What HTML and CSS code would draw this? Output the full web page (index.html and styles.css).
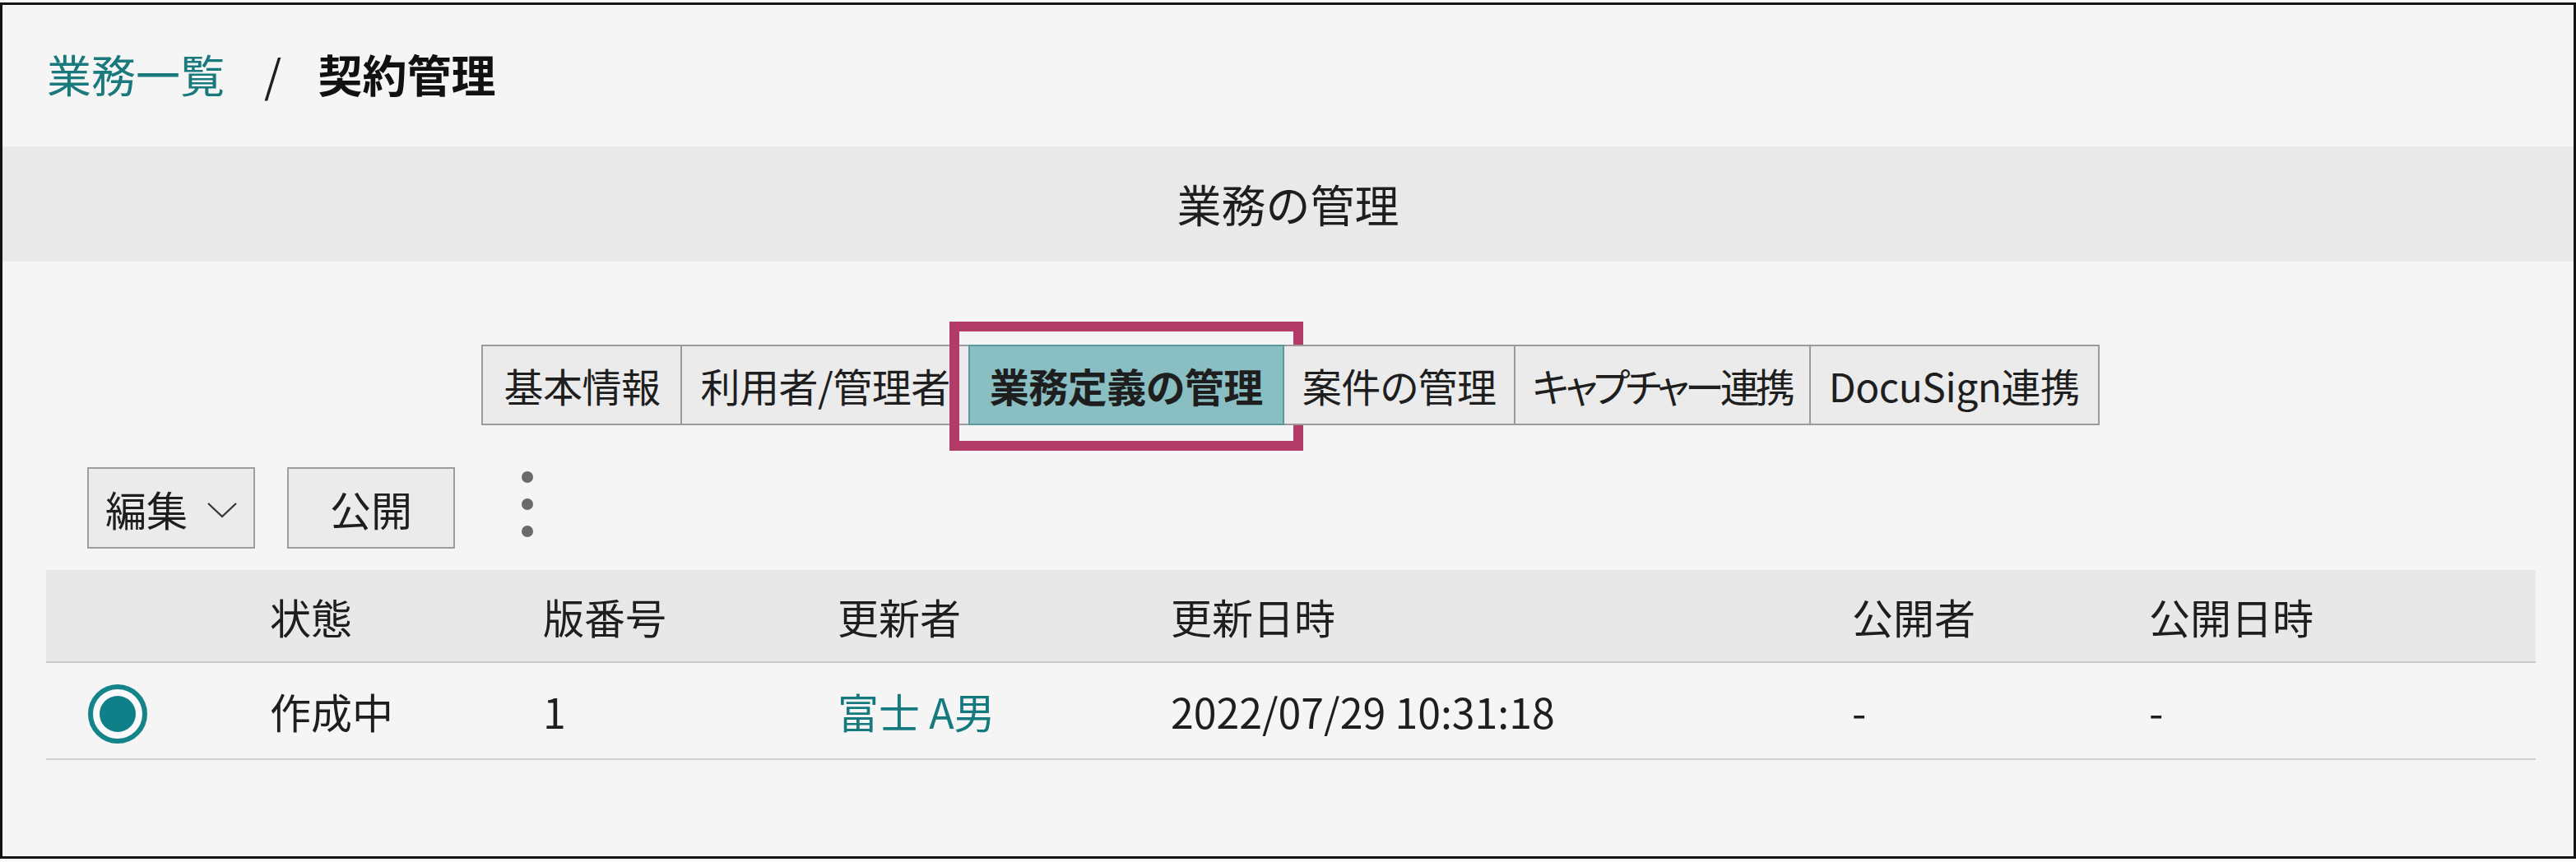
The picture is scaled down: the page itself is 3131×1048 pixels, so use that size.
FILE: index.html
```html
<!DOCTYPE html>
<html lang="ja">
<head>
    <meta charset="UTF-8">
    <title>契約管理 - 業務の管理</title>
    <link rel="stylesheet" href="styles.css">
</head>
<body>
<div class="frame">

    <nav class="crumbs">
        <a href="#" class="crumb-link">業務一覧</a>
        <span class="crumb-sep">/</span>
        <strong class="crumb-current">契約管理</strong>
    </nav>

    <div class="band">業務の管理</div>

    <div class="tabs">
        <div class="tab">基本情報</div>
        <div class="tab">利用者/管理者</div>
        <div class="tab active">業務定義の管理</div>
        <div class="tab">案件の管理</div>
        <div class="tab tab-narrow">キャプチャー連携</div>
        <div class="tab">DocuSign連携</div>
    </div>

    <div class="toolbar">
        <button class="btn">
            編集
            <svg class="chevron" width="36" height="20" viewBox="0 0 36 20">
                <polyline points="1,2 18,18 35,2" fill="none" stroke="#333" stroke-width="2.2"/>
            </svg>
        </button>
        <button class="btn">公開</button>
        <div class="kebab">
            <span></span><span></span><span></span>
        </div>
    </div>

    <table class="versions">
        <colgroup>
            <col style="width: 272px">
            <col style="width: 332px">
            <col style="width: 358px">
            <col style="width: 405px">
            <col style="width: 828px">
            <col style="width: 361px">
            <col>
        </colgroup>
        <thead>
            <tr>
                <th></th>
                <th>状態</th>
                <th>版番号</th>
                <th>更新者</th>
                <th>更新日時</th>
                <th>公開者</th>
                <th>公開日時</th>
            </tr>
        </thead>
        <tbody>
            <tr>
                <td class="select-cell"><span class="radio"></span></td>
                <td>作成中</td>
                <td>1</td>
                <td><a href="#" class="user-link">富士 A男</a></td>
                <td>2022/07/29 10:31:18</td>
                <td>-</td>
                <td>-</td>
            </tr>
        </tbody>
    </table>

</div>
</body>
</html>
```

FILE: styles.css
```css
body {
    margin: 0;
    background: #fbfbfb;
    font-family: "Noto Sans CJK JP", "Noto Sans", sans-serif;
    color: #1e1e1e;
}
.frame {
    margin-top: 3px;
    height: 1035px;
    border: 3px solid #141414;
    background: #f5f5f5;
    overflow: hidden;
}

/* Breadcrumb */
.crumbs {
    padding: 44px 0 0 54px;
    height: 128px;
    box-sizing: border-box;
    font-size: 54px;
    line-height: 80px;
}
.crumb-link {
    color: #19797d;
    text-decoration: none;
}
.crumb-sep {
    margin: 0 32px 0 36px;
}
.crumb-current {
    font-weight: bold;
    color: #111;
}

/* Section header */
.band {
    margin-top: 44px;
    height: 140px;
    line-height: 140px;
    background: #e9e9e9;
    text-align: center;
    font-size: 54px;
}

/* Tabs */
.tabs {
    display: flex;
    justify-content: center;
    margin-top: 101px;
    padding-left: 6px;
    font-feature-settings: "palt";
}
.tab {
    position: relative;
    padding: 0 22px;
    font-size: 48px;
    line-height: 94px;
    letter-spacing: -0.5px;
    background: #ebebeb;
    border: 2px solid #9b9b9b;
    border-left-width: 0;
    white-space: nowrap;
}
.tab:first-child {
    border-left-width: 2px;
    padding: 0 25px;
}
.tab-narrow {
    letter-spacing: -5px;
    padding: 0 22px 0 20px;
}
.tab.active {
    background: #89bfc3;
    border-color: #5c979b;
    border-left: 2px solid #5c979b;
    margin-left: -2px;
    font-weight: bold;
    padding: 0 24px;
}
/* highlight frame over the active tab */
.tab.active::after {
    content: "";
    position: absolute;
    top: -30px;
    left: -25px;
    right: -25px;
    bottom: -33px;
    border: 12px solid #b23b67;
}

/* Toolbar */
.toolbar {
    display: flex;
    align-items: center;
    gap: 39px;
    margin: 51px 0 0 103px;
}
.btn {
    display: flex;
    align-items: center;
    justify-content: center;
    gap: 24px;
    min-width: 204px;
    height: 99px;
    padding: 0 20px;
    background: #ebebeb;
    border: 2px solid #9d9d9d;
    font-family: inherit;
    font-size: 50px;
    color: #1e1e1e;
}
.chevron {
    margin-top: 4px;
}
.kebab {
    display: flex;
    flex-direction: column;
    gap: 19px;
    margin: -10px 0 0 42px;
}
.kebab span {
    width: 14px;
    height: 14px;
    border-radius: 50%;
    background: #6a6a6a;
}

/* Version table */
.versions {
    margin: 26px 0 0 53px;
    width: 3026px;
    table-layout: fixed;
    border-collapse: collapse;
    font-size: 50px;
}
.versions th {
    height: 111px;
    padding: 0;
    background: #e8e8e8;
    border-bottom: 2px solid #c9c9c9;
    text-align: left;
    font-weight: normal;
}
.versions td {
    height: 116px;
    padding: 0;
    border-bottom: 2px solid #d0d0d0;
    vertical-align: middle;
}
.select-cell {
    padding-left: 51px !important;
}
.radio {
    display: flex;
    align-items: center;
    justify-content: center;
    width: 72px;
    height: 72px;
    margin-top: 8px;
    box-sizing: border-box;
    border: 6px solid #14848a;
    border-radius: 50%;
    background: #fafafa;
}
.radio::after {
    content: "";
    width: 44px;
    height: 44px;
    border-radius: 50%;
    background: #0f8088;
}
.user-link {
    color: #15797e;
    text-decoration: none;
}
```
